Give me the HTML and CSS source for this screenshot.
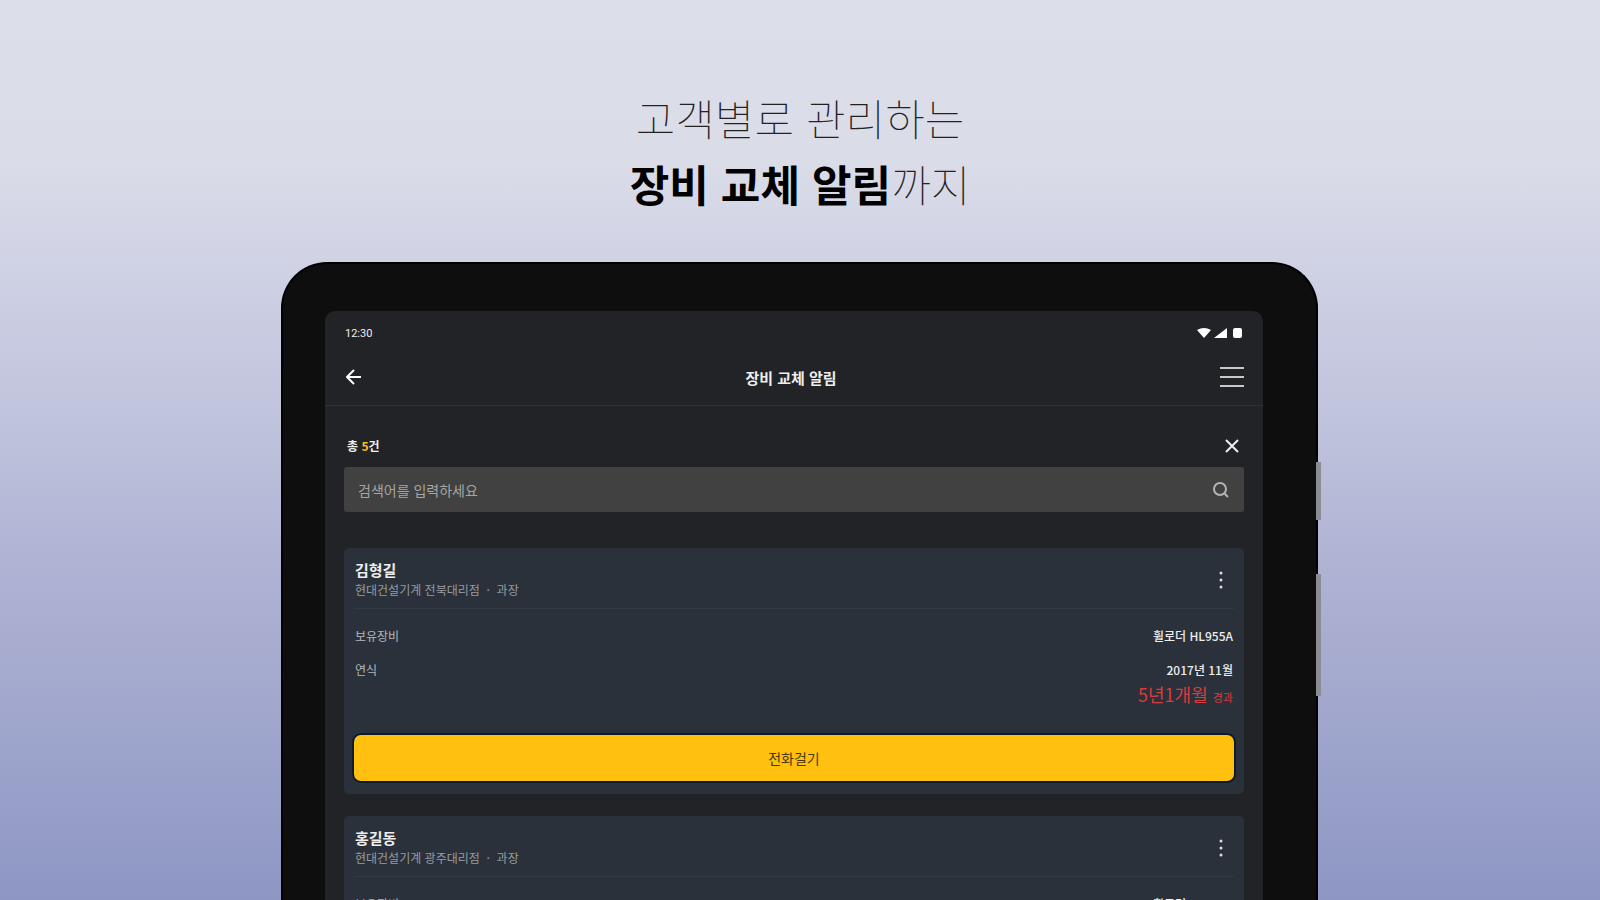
FILE: index.html
```html
<!DOCTYPE html>
<html lang="ko">
<head>
  <meta charset="UTF-8" />
  <title>장비 교체 알림</title>
  <meta name="viewport" content="width=device-width, initial-scale=1.0">
  <link rel="stylesheet" href="styles.css">
</head>
<body>

  <header class="headline">
    <h1>고객별로 관리하는<br><strong>장비 교체 알림</strong>까지</h1>
  </header>

  <main class="stage">
    <div class="tablet">
      <span class="side-key power"></span>
      <span class="side-key volume"></span>

      <div class="screen">
        <div class="status-bar">
          <span class="time">12:30</span>
          <svg class="status-icons" width="46" height="12" viewBox="0 0 46 12" fill="#fff" aria-hidden="true">
            <path d="M0 3Q7-1 14 3L7 11Z"/>
            <path d="M17 11L30 1V11Z"/>
            <rect x="36" y="1" width="9" height="10" rx="2"/>
          </svg>
        </div>

        <nav class="app-bar">
          <button class="icon-btn" aria-label="뒤로">
            <svg width="16" height="16" viewBox="0 0 16 16" fill="none" stroke="#fff" stroke-width="2"><path d="M15 8H2M8 1L1 8L8 15"/></svg>
          </button>
          <h2>장비 교체 알림</h2>
          <button class="icon-btn" aria-label="메뉴">
            <svg width="24" height="22" viewBox="0 0 24 22" stroke="#c8c8c8" stroke-width="2"><path d="M0 2H24M0 11H24M0 20H24"/></svg>
          </button>
        </nav>

        <div class="content">
          <div class="summary">
            <p>총 <em>5</em>건</p>
            <button class="icon-btn" aria-label="닫기">
              <svg width="14" height="14" viewBox="0 0 14 14" fill="none" stroke="#eee" stroke-width="2"><path d="M1 1L13 13M13 1L1 13"/></svg>
            </button>
          </div>

          <form class="search">
            <input type="text" placeholder="검색어를 입력하세요" aria-label="검색어">
            <button class="icon-btn" type="button" aria-label="검색">
              <svg width="17" height="17" viewBox="0 0 17 17" fill="none" stroke="#b4b4b4" stroke-width="2"><circle cx="8" cy="8" r="6"/><path d="M12 12L16 16"/></svg>
            </button>
          </form>

          <article class="card">
            <div class="card-head">
              <div>
                <h3>김형길</h3>
                <p>현대건설기계 전북대리점 &nbsp;·&nbsp; 과장</p>
              </div>
              <button class="icon-btn" aria-label="더보기">
                <svg width="4" height="18" viewBox="0 0 4 18" fill="#ddd"><circle cx="2" cy="2" r="1.500"/><circle cx="2" cy="9" r="1.500"/><circle cx="2" cy="16" r="1.500"/></svg>
              </button>
            </div>
            <dl>
              <dt>보유장비</dt>
              <dd>휠로더 HL955A</dd>
              <dt>연식</dt>
              <dd>2017년 11월</dd>
            </dl>
            <p class="elapsed">5년1개월 <small>경과</small></p>
            <button class="call">전화걸기</button>
          </article>

          <article class="card">
            <div class="card-head">
              <div>
                <h3>홍길동</h3>
                <p>현대건설기계 광주대리점 &nbsp;·&nbsp; 과장</p>
              </div>
              <button class="icon-btn" aria-label="더보기">
                <svg width="4" height="18" viewBox="0 0 4 18" fill="#ddd"><circle cx="2" cy="2" r="1.500"/><circle cx="2" cy="9" r="1.500"/><circle cx="2" cy="16" r="1.500"/></svg>
              </button>
            </div>
            <dl>
              <dt>보유장비</dt>
              <dd>휠로더 HL955A</dd>
            </dl>
          </article>
        </div>
      </div>
    </div>
  </main>

</body>
</html>
```
FILE: styles.css
```css
* {
  box-sizing: border-box;
}

body {
  display: flex;
  flex-direction: column;
  height: 100vh;
  margin: 0;
  overflow: hidden;
  font-family: "Noto Sans CJK KR", sans-serif;
  background: linear-gradient(#dcdfe9 0%, #dadce8 18%, #cccfe3 33%, #bcc0da 50%, #b0b3d4 62%, #a2a8cd 78%, #8e96c4 100%);
}

h1, h2, h3, p, dl, dd {
  margin: 0;
}

button, input {
  font-family: inherit;
  border: 0;
  padding: 0;
}

.headline {
  padding: 84px 20px 46px;
  text-align: center;
}

.headline h1 {
  font-size: 43px;
  font-weight: 100;
  line-height: 66px;
  color: #222;
}

.headline strong {
  font-weight: 700;
  color: #000;
}

.stage {
  flex: 1;
  min-height: 0;
  padding: 0 282px 0 281px;
}

.tablet {
  position: relative;
  height: 100%;
  padding: 47px 53px 0 42px;
  background: #0e0e0e;
  border: 2px solid #000;
  border-bottom: 0;
  border-radius: 46px 46px 0 0;
}

.side-key {
  position: absolute;
  left: 100%;
  width: 5px;
  background: #8c8d94;
}

.power {
  top: 198px;
  height: 58px;
}

.volume {
  top: 310px;
  height: 122px;
}

.screen {
  height: 100%;
  overflow: hidden;
  color: #eee;
  background: #222326;
  border-radius: 10px 10px 0 0;
}

.status-bar {
  display: flex;
  justify-content: space-between;
  align-items: center;
  height: 42px;
  padding: 2px 20px 0;
}

.time {
  font-family: Roboto, sans-serif;
  font-size: 11px;
}

.icon-btn {
  display: flex;
  background: none;
  cursor: pointer;
}

.app-bar {
  display: flex;
  justify-content: space-between;
  align-items: center;
  height: 53px;
  padding: 0 19px 4px 21px;
  border-bottom: 1px solid #303134;
}

.app-bar h2 {
  font-size: 15px;
  font-weight: 700;
}

.content {
  padding: 23px 19px;
}

.summary {
  display: flex;
  justify-content: space-between;
  align-items: center;
  height: 33px;
  padding: 0 5px 0 3px;
  margin-bottom: 5px;
  font-size: 12px;
  font-weight: 700;
}

.summary em {
  font-style: normal;
  color: #ffc010;
}

.search {
  display: flex;
  align-items: center;
  height: 45px;
  padding: 0 15px 0 14px;
  margin-bottom: 36px;
  background: #414141;
  border-radius: 3px;
}

.search input {
  flex: 1;
  font-size: 14px;
  color: #eee;
  background: none;
  outline: 0;
}

.search input::placeholder {
  color: #a5a5a5;
}

.card {
  padding: 0 10px 13px;
  margin-bottom: 22px;
  background: #2a313a;
  border-radius: 5px;
}

.card-head {
  display: flex;
  justify-content: space-between;
  align-items: center;
  height: 61px;
  padding: 4px 11px 0 1px;
  border-bottom: 1px solid #323a43;
}

.card h3 {
  font-size: 15px;
  line-height: 20px;
}

.card-head p {
  font-size: 12px;
  line-height: 20px;
  color: #969ba1;
}

.card dl {
  display: grid;
  grid-template-columns: auto 1fr;
  row-gap: 14px;
  padding: 17px 1px 0;
  font-size: 12px;
  line-height: 20px;
}

.card dt {
  color: #b4b7bb;
}

.card dd {
  text-align: right;
  font-weight: 500;
}

.elapsed {
  padding-right: 1px;
  font-size: 18px;
  line-height: 28px;
  text-align: right;
  color: #d93c3f;
}

.elapsed small {
  font-size: 11px;
}

.call {
  width: 100%;
  height: 46px;
  margin-top: 24px;
  font-size: 14px;
  color: #49380a;
  background: #ffc010;
  border-radius: 7px;
  box-shadow: 0 0 0 2px #0b1c30;
  cursor: pointer;
}
```
